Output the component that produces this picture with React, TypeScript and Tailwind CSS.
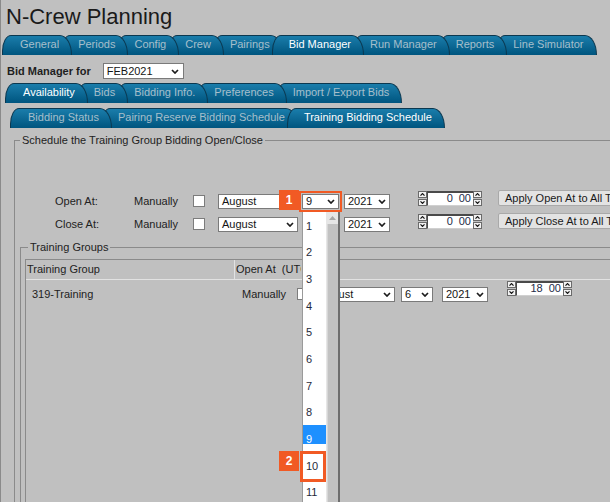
import React from 'react';

const row1 = ['General', 'Periods', 'Config', 'Crew', 'Pairings', 'Bid Manager', 'Run Manager', 'Reports', 'Line Simulator'];
const row2 = ['Availability', 'Bids', 'Bidding Info.', 'Preferences', 'Import / Export Bids'];
const row3 = ['Bidding Status', 'Pairing Reserve Bidding Schedule', 'Training Bidding Schedule'];
const days = [1, 2, 3, 4, 5, 6, 7, 8, 9, 10, 11, 12];

function TabRow({ items, active, className }: { items: string[]; active: string; className: string }) {
  return (
    <div className={`flex h-[20px] items-end ${className}`}>
      {items.map((label, i) => {
        const on = label === active;
        return (
          <div
            key={label}
            style={{ zIndex: on ? 30 : 20 - i }}
            className={`relative h-[20px] shrink-0 whitespace-nowrap rounded-tl-[9px_16px] rounded-tr-[12px_20px] border border-b-0 border-[#0b3850] bg-linear-to-b from-[#1a7dab] to-[#00557f] pr-[12px] text-[11px] leading-[17px] ${
              i === 0 ? 'pl-[17px]' : '-ml-[11px] pl-[16px]'
            } ${on ? 'text-white' : 'text-[#a6bfcb]'}`}
          >
            {label}
          </div>
        );
      })}
    </div>
  );
}

function Chevron() {
  return (
    <svg width="8" height="5" viewBox="0 0 8 5" className="ml-auto shrink-0">
      <path d="M1 1 L4 4 L7 1" fill="none" stroke="#1c1c1c" strokeWidth="1.7" />
    </svg>
  );
}

function Select({ value, className }: { value: string; className: string }) {
  return (
    <div
      className={`flex h-[15px] shrink-0 items-center border border-[#7a7a7a] bg-white pl-[3px] pr-[3px] text-[11px] leading-none text-[#141414] ${className}`}
    >
      {value && <span>{value}</span>}
      <Chevron />
    </div>
  );
}

function Checkbox({ className }: { className: string }) {
  return <div className={`h-[12px] w-[12px] shrink-0 border border-[#7c7c7c] bg-white ${className}`} />;
}

function Arrow({ up }: { up: boolean }) {
  return (
    <div className="flex h-[7px] w-[9px] items-center justify-center border border-[#6a6a6a] bg-[#f2f2f2]">
      <svg width="5" height="3" viewBox="0 0 5 3">
        <path d={up ? 'M0.5 2.6 L2.5 0.6 L4.5 2.6' : 'M0.5 0.4 L2.5 2.4 L4.5 0.4'} fill="none" stroke="#111" strokeWidth="1.2" />
      </svg>
    </div>
  );
}

function ArrowCol() {
  return (
    <div className="flex shrink-0 flex-col gap-[1px]">
      <Arrow up />
      <Arrow up={false} />
    </div>
  );
}

function Spinner({ h, m, className, inputW }: { h: string; m: string; className: string; inputW: string }) {
  return (
    <div className={`flex shrink-0 items-center ${className}`}>
      <ArrowCol />
      <div
        className={`flex h-[15px] items-center justify-end gap-[6px] border-t-2 border-l border-[#4a4a4a] border-b border-b-[#d0d0d0] bg-white pr-[2px] text-[11px] leading-none text-[#1d2b48] ${inputW}`}
      >
        <span>{h}</span>
        <span>{m}</span>
      </div>
      <ArrowCol />
    </div>
  );
}

function Badge({ n, className }: { n: string; className: string }) {
  return (
    <div
      className={`absolute z-40 flex h-[20px] w-[20px] items-center justify-center bg-[#f15a24] text-[12px] font-bold text-white ${className}`}
    >
      {n}
    </div>
  );
}

function DayList() {
  return (
    <div className="absolute left-0 top-[18px] z-30 flex w-[38px] border-l border-r-2 border-l-[#9a9a9a] border-r-[#6e6e6e] bg-white">
      <div className="w-[23px]">
        {days.map((d) => (
          <div
            key={d}
            className={`relative h-[26.7px] pl-[3px] text-[11px] leading-[28px] ${
              d === 9
                ? 'bg-[linear-gradient(to_bottom,#1e90ff_72%,transparent_72%)] text-white'
                : 'text-[#1f2a3a]'
            }`}
          >
            {d}
            {d === 10 && (
              <>
                <div className="absolute -left-[3px] -top-[1px] h-[31px] w-[26px] border-[3px] border-[#f15a24]" />
                <Badge n="2" className="-left-[24px] -top-[1px]" />
              </>
            )}
          </div>
        ))}
      </div>
      <div className="flex w-[12px] flex-col bg-[#e6e6e6]">
        <div className="flex h-[12px] items-center justify-center">
          <svg width="7" height="4" viewBox="0 0 7 4">
            <path d="M0 4 L3.5 0 L7 4 Z" fill="#a6a6a6" />
          </svg>
        </div>
        <div className="ml-[1px] flex-1 border-l border-[#d6d6d6] bg-[#c2c2c2]" />
      </div>
    </div>
  );
}

export default function App() {
  return (
    <div className="relative h-[502px] w-[610px] overflow-hidden border-l border-[#8a8a8a] bg-[#c0c0c0] text-[#1e1e1e] [font-family:'Liberation_Sans',Arial,sans-serif]">
      <h1 className="pl-[5px] pt-[4px] text-[22px] font-normal leading-[26px] text-[#1a1a1a]">N-Crew Planning</h1>

      <TabRow items={row1} active="Bid Manager" className="ml-[1px] mt-[5px]" />

      <div className="mt-[8px] flex h-[16px] items-center pl-[6px]">
        <span className="text-[11px] font-bold">Bid Manager for</span>
        <Select value="FEB2021" className="ml-[12px] h-[16px] w-[81px] pr-[4px]" />
      </div>

      <TabRow items={row2} active="Availability" className="ml-[4px] mt-[4px]" />
      <TabRow items={row3} active="Training Bidding Schedule" className="ml-[9px] mt-[5px]" />

      <fieldset className="ml-[13px] mt-[5px] h-[420px] w-[640px] border border-[#8a8a8a]">
        <legend className="ml-[5px] px-[2px] text-[11px] leading-[14px] text-[#222]">
          Schedule the Training Group Bidding Open/Close
        </legend>

        <div className="mt-[43px] flex h-[22px] items-center pl-[40px] text-[11px] text-[#222]">
          <span className="w-[79px] shrink-0">Open At:</span>
          <span className="w-[59px] shrink-0">Manually</span>
          <Checkbox className="mr-[13px]" />
          <Select value="August" className="w-[80px]" />
          <div className="relative ml-[4px] shrink-0">
            <Select value="9" className="w-[37px] outline-2 outline-offset-1 outline-[#f15a24]" />
            <Badge n="1" className="-left-[23px] -top-[4px]" />
            <DayList />
          </div>
          <Select value="2021" className="ml-[5px] w-[46px]" />
          <Spinner h="0" m="00" inputW="w-[46px]" className="mb-[6px] ml-[28px]" />
          <button className="mb-[6px] ml-[16px] h-[16px] shrink-0 whitespace-nowrap rounded-[2px] border border-[#a9a9a9] bg-[#e3e3e3] px-[6px] text-[11px] leading-[14px] text-[#1a1a1a]">
            Apply Open At to All Training Groups
          </button>
        </div>

        <div className="mt-[1px] flex h-[22px] items-center pl-[40px] text-[11px] text-[#222]">
          <span className="w-[79px] shrink-0">Close At:</span>
          <span className="w-[59px] shrink-0">Manually</span>
          <Checkbox className="mr-[13px]" />
          <Select value="August" className="w-[80px]" />
          <Select value="" className="ml-[4px] w-[37px]" />
          <Select value="2021" className="ml-[5px] w-[46px]" />
          <Spinner h="0" m="00" inputW="w-[46px]" className="mb-[6px] ml-[28px]" />
          <button className="mb-[6px] ml-[16px] h-[16px] shrink-0 whitespace-nowrap rounded-[2px] border border-[#a9a9a9] bg-[#e3e3e3] px-[6px] text-[11px] leading-[14px] text-[#1a1a1a]">
            Apply Close At to All Training Groups
          </button>
        </div>

        <fieldset className="ml-[5px] mt-[5px] h-[320px] w-[620px] border border-[#8a8a8a]">
          <legend className="ml-[7px] px-[2px] text-[11px] leading-[14px] text-[#222]">Training Groups</legend>

          <div className="ml-[4px] mt-[5px] h-[300px] w-[610px] border-l border-t border-[#8a8a8a]">
            <div className="flex h-[20px] text-[11px] leading-[19px] text-[#222]">
              <div className="w-[209px] shrink-0 border-b border-r border-[#e2e2e2] pl-[1px]">Training Group</div>
              <div className="flex-1 border-b border-[#e2e2e2] pl-[1px]">
                <div className="w-[65px] overflow-hidden whitespace-nowrap">Open At&nbsp;&nbsp;(UTC)</div>
              </div>
            </div>

            <div className="mt-[3px] flex h-[22px] items-center text-[11px] text-[#222]">
              <div className="w-[209px] shrink-0 pl-[6px]">319-Training</div>
              <span className="ml-[7px] w-[44px] shrink-0">Manually</span>
              <Checkbox className="ml-[11px]" />
              <Select value="August" className="ml-[6px] w-[80px]" />
              <Select value="6" className="ml-[6px] w-[32px]" />
              <Select value="2021" className="ml-[9px] w-[46px]" />
              <Spinner h="18" m="00" inputW="w-[47px]" className="mb-[12px] ml-[19px]" />
            </div>
          </div>
        </fieldset>
      </fieldset>
    </div>
  );
}
